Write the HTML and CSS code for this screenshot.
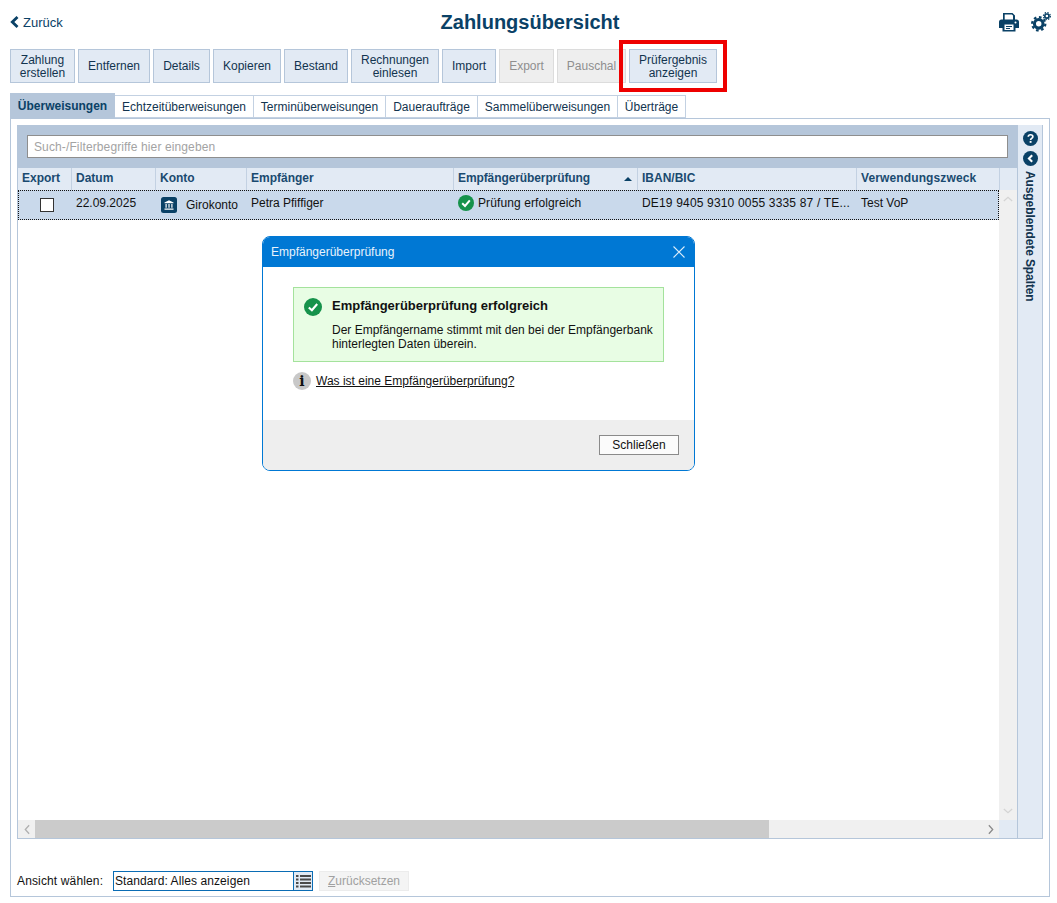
FILE: index.html
```html
<!DOCTYPE html>
<html lang="de">
<head>
    <meta charset="UTF-8">
    <title>Zahlungsübersicht</title>
    <link rel="stylesheet" href="styles.css">
</head>
<body>
    <div class="page">
        <header class="topbar">
            <a class="back"><svg class="back-icon" viewBox="0 0 9 12"><path d="M7.500 1 2.300 6l5.200 5" fill="none" stroke="#0a4166" stroke-width="2.800"/></svg>Zurück</a>
            <h1>Zahlungsübersicht</h1>
            <div class="top-icons">
                <svg class="print-icon" viewBox="0 0 20 20"><path fill="#0a4166" d="M4 1h9.500L16 3.500V8H14V3.500L12.800 2.600H5.700V8H4z"/><path fill="#0a4166" fill-rule="evenodd" d="M2.500 7.500h15A2.500 2.500 0 0 1 20 10v6h-3.500v3.500h-13V16H0v-6a2.500 2.500 0 0 1 2.500-2.500zM5.500 12.500v5.500h9v-5.500zm1.500 1.500h6v1H7zm0 2h4v1H7zM16.500 9.500a1 1 0 1 0 0 2 1 1 0 0 0 0-2z"/></svg>
                <svg class="cog-icon" viewBox="0 0 22 22"><g fill="none" stroke="#0a4166"><circle cx="8.500" cy="13" r="4.700" stroke-width="3.400"/><circle cx="8.500" cy="13" r="7.300" stroke-width="2.400" stroke-dasharray="2.900 2.830"/><circle cx="17.500" cy="4.500" r="2.300" stroke-width="1.800"/><circle cx="17.500" cy="4.500" r="3.800" stroke-width="1.400" stroke-dasharray="1.600 1.380"/></g></svg>
            </div>
        </header>

        <div class="toolbar">
            <button class="tool two w65">Zahlung<br>erstellen</button>
            <button class="tool w72">Entfernen</button>
            <button class="tool w57">Details</button>
            <button class="tool w68">Kopieren</button>
            <button class="tool w64">Bestand</button>
            <button class="tool two w88">Rechnungen<br>einlesen</button>
            <button class="tool w54">Import</button>
            <button class="tool w55 off">Export</button>
            <button class="tool w69 off">Pauschal</button>
            <button class="tool two w88 marked">Prüfergebnis<br>anzeigen</button>
        </div>

        <nav class="tabs">
            <a class="tab active t105">Überweisungen</a>
            <a class="tab t139">Echtzeitüberweisungen</a>
            <a class="tab t132">Terminüberweisungen</a>
            <a class="tab t92">Daueraufträge</a>
            <a class="tab t140">Sammelüberweisungen</a>
            <a class="tab t68">Überträge</a>
        </nav>

        <main class="panel">
            <div class="workspace">
                <section class="table-area">
                    <div class="filter-band">
                        <input class="filter" type="text" placeholder="Such-/Filterbegriffe hier eingeben">
                    </div>
                    <div class="head-row">
                        <div class="th c-export">Export</div>
                        <div class="th c-datum">Datum</div>
                        <div class="th c-konto">Konto</div>
                        <div class="th c-name">Empfänger</div>
                        <div class="th c-check">Empfängerüberprüfung<span class="sort"></span></div>
                        <div class="th c-iban">IBAN/BIC</div>
                        <div class="th c-zweck">Verwendungszweck</div>
                        <div class="th c-rest"></div>
                    </div>
                    <div class="table-body">
                        <div class="rows">
                            <div class="row">
                                <div class="td c-export"><span class="checkbox"></span></div>
                                <div class="td c-datum">22.09.2025</div>
                                <div class="td c-konto konto-cell">
                                    <svg class="bank-icon" viewBox="0 0 16 16"><rect width="16" height="16" rx="2.500" fill="#0a4166"/><path fill="#fff" d="M8 3.300 12.500 5.600V6.300H3.500V5.600zM4.500 7h1.200v3.800H4.500zM7.400 7h1.200v3.800H7.400zM10.300 7h1.200v3.800h-1.200zM3.500 11.500h9v1.200h-9z"/></svg>
                                    <span class="konto-name">Girokonto</span>
                                </div>
                                <div class="td c-name">Petra Pfiffiger</div>
                                <div class="td c-check check-cell">
                                    <svg class="ok-icon" viewBox="0 0 16 16"><circle cx="8" cy="8" r="8" fill="#16924b"/><path d="M4.200 8.300 7 11l4.800-5.600" fill="none" stroke="#fff" stroke-width="2"/></svg>
                                    Prüfung erfolgreich
                                </div>
                                <div class="td c-iban">DE19 9405 9310 0055 3335 87 / TE...</div>
                                <div class="td c-zweck">Test VoP</div>
                            </div>
                        </div>
                        <div class="vscroll">
                            <svg viewBox="0 0 12 7"><path d="M1 6 6 1.500 11 6" fill="none" stroke="#d4d4d4" stroke-width="1.500"/></svg>
                            <svg viewBox="0 0 12 7"><path d="M1 1 6 5.500 11 1" fill="none" stroke="#d4d4d4" stroke-width="1.500"/></svg>
                        </div>
                    </div>
                    <div class="hscroll-row">
                        <div class="hscroll">
                            <svg class="arrow" viewBox="0 0 7 12"><path d="M6 1 1.500 6 6 11" fill="none" stroke="#b0b0b0" stroke-width="1.500"/></svg>
                            <div class="thumb"></div>
                            <svg class="arrow" viewBox="0 0 7 12"><path d="M1 1 5.500 6 1 11" fill="none" stroke="#8a8a8a" stroke-width="1.500"/></svg>
                        </div>
                        <div class="corner"></div>
                    </div>
                </section>
                <aside class="side">
                    <svg class="side-icon" viewBox="0 0 16 16"><circle cx="8" cy="8" r="8" fill="#0a4166"/><path d="M5.600 6.200C5.700 4.800 6.700 4 8 4c1.400 0 2.500.8 2.500 2.100 0 1.800-2.400 1.800-2.400 3.400" fill="none" stroke="#fff" stroke-width="1.800"/><rect x="7.100" y="10.600" width="2" height="2" fill="#fff"/></svg>
                    <svg class="side-icon" viewBox="0 0 16 16"><circle cx="8" cy="8" r="8" fill="#0a4166"/><path d="M9.800 4.500 6.300 8l3.500 3.500" fill="none" stroke="#fff" stroke-width="2.200"/></svg>
                    <div class="side-label">Ausgeblendete Spalten</div>
                </aside>
            </div>

            <footer class="view-bar">
                <label class="view-label">Ansicht wählen:</label>
                <div class="view-select">
                    <span class="view-value">Standard: Alles anzeigen</span>
                    <span class="view-btn"><svg viewBox="0 0 15 14"><path fill="#4a4a4a" d="M0 1h2.500v2H0zM4 1h11v2H4zM0 4.500h2.500v2H0zM4 4.500h11v2H4zM0 8h2.500v2H0zM4 8h11v2H4zM0 11.500h2.500v2H0zM4 11.500h11v2H4z"/></svg></span>
                </div>
                <button class="reset"><u>Z</u>urücksetzen</button>
            </footer>
        </main>
    </div>

    <!-- Dialog -->
    <div class="dialog">
        <div class="dialog-title">
            <span>Empfängerüberprüfung</span>
            <svg class="close-icon" viewBox="0 0 12 12"><path d="M.5.500l11 11M11.500.500l-11 11" stroke="#d9ecfa" stroke-width="1.100" fill="none"/></svg>
        </div>
        <div class="dialog-body">
            <div class="success">
                <svg class="success-icon" viewBox="0 0 18 18"><circle cx="9" cy="9" r="9" fill="#16924b"/><path d="M4.800 9.400 7.900 12.300 13.200 6" fill="none" stroke="#fff" stroke-width="2.100"/></svg>
                <div>
                    <h2>Empfängerüberprüfung erfolgreich</h2>
                    <p>Der Empfängername stimmt mit den bei der Empfängerbank hinterlegten Daten überein.</p>
                </div>
            </div>
            <div class="info-line">
                <span class="info-icon">i</span>
                <a class="info-link">Was ist eine Empfängerüberprüfung?</a>
            </div>
        </div>
        <div class="dialog-foot">
            <button class="close-btn">Schließen</button>
        </div>
    </div>
</body>
</html>
```

FILE: styles.css
```css
* {
    margin: 0;
    padding: 0;
    box-sizing: border-box;
}

html, body {
    height: 100%;
}

body {
    font-family: "Liberation Sans", Arial, sans-serif;
    font-size: 12px;
    color: #111;
    background-color: #fff;
    overflow: hidden;
}

.page {
    width: 1057px;
    height: 903px;
    padding: 0 7px 6px 10px;
    display: flex;
    flex-direction: column;
}

/* Top bar */
.topbar {
    height: 49px;
    padding-bottom: 5px;
    display: flex;
    align-items: center;
    justify-content: space-between;
    position: relative;
}

.back {
    display: flex;
    align-items: center;
    gap: 4px;
    font-size: 13px;
    color: #0a4166;
}

.back-icon {
    width: 9px;
    height: 12px;
}

.topbar h1 {
    position: absolute;
    left: 0;
    right: 0;
    top: 11px;
    text-align: center;
    font-size: 20px;
    line-height: 23px;
    color: #0a4166;
}

.top-icons {
    display: flex;
    align-items: center;
    gap: 12px;
    margin-right: -1px;
}

.print-icon {
    width: 20px;
    height: 20px;
}

.cog-icon {
    width: 20px;
    height: 20px;
}

/* Toolbar */
.toolbar {
    display: flex;
    gap: 3px;
    height: 34px;
}

.tool {
    height: 34px;
    font-family: inherit;
    font-size: 12px;
    line-height: 13px;
    color: #12344f;
    background-color: #e2eaf4;
    border: 1px solid #b5c6da;
}

.tool.two {
    padding-top: 2px;
}

.tool.off {
    color: #8f8f8f;
    background-color: #eeeeee;
    border-color: #dcdcdc;
}

.tool.marked {
    position: relative;
}

.tool.marked::after {
    content: "";
    position: absolute;
    top: -10px;
    bottom: -10px;
    left: -11px;
    right: -11px;
    border: 4px solid #ee0000;
}

.w54 { width: 54px; }
.w55 { width: 55px; }
.w57 { width: 57px; }
.w64 { width: 64px; }
.w65 { width: 65px; }
.w68 { width: 68px; }
.w69 { width: 69px; }
.w72 { width: 72px; }
.w88 { width: 88px; }

/* Tabs */
.tabs {
    display: flex;
    align-items: flex-end;
    height: 25px;
    margin-top: 10px;
    margin-bottom: 0;
}

.tab {
    height: 23px;
    line-height: 22px;
    text-align: center;
    color: #12344f;
    background-color: #fff;
    border: 1px solid #c3d1e2;
    border-left: 0;
}

.tab.active {
    height: 25px;
    line-height: 26px;
    font-weight: bold;
    color: #0a4166;
    background-color: #b5c6da;
    border: 0;
}

.t68 { width: 68px; }
.t92 { width: 92px; }
.t105 { width: 105px; }
.t132 { width: 132px; }
.t139 { width: 139px; }
.t140 { width: 140px; }

/* Main panel */
.panel {
    flex: 1;
    border: 1px solid #b5c6da;
    padding: 6px 6px 0 6px;
    display: flex;
    flex-direction: column;
}

.workspace {
    height: 714px;
    display: flex;
    border: 1px solid #b5c6da;
    border-top: 0;
}

.table-area {
    width: 999px;
    display: flex;
    flex-direction: column;
}

.filter-band {
    height: 43px;
    padding: 10px 9px;
    background-color: #b5c6da;
}

.filter {
    display: block;
    width: 981px;
    height: 23px;
    padding: 0 6px;
    font-family: inherit;
    font-size: 12px;
    letter-spacing: 0.12px;
    border: 1px solid #8e8e8e;
    background-color: #fff;
}

.filter::placeholder {
    color: #a3a3a3;
    opacity: 1;
}

.head-row {
    display: flex;
    height: 22px;
    background-color: #e2eaf4;
}

.th {
    line-height: 21px;
    padding-left: 4px;
    font-weight: bold;
    color: #1a4a70;
    border-right: 1px solid #c3d1e2;
    position: relative;
}

.th.c-check {
    letter-spacing: -0.1px;
}

.th.c-zweck {
    letter-spacing: 0.12px;
}

.sort {
    position: absolute;
    right: 5px;
    top: 9px;
    border-left: 4px solid transparent;
    border-right: 4px solid transparent;
    border-bottom: 4px solid #0a4166;
}

.c-export { width: 54px; }
.c-datum { width: 84px; }
.c-konto { width: 91px; }
.c-name { width: 207px; }
.c-check { width: 184px; }
.c-iban { width: 219px; }
.c-zweck { width: 143px; }
.c-rest { flex: 1; border-right: 0; }

.table-body {
    flex: 1;
    display: flex;
    min-height: 0;
}

.rows {
    flex: 1;
    min-width: 0;
}

.row {
    display: flex;
    height: 30px;
    background-color: #c9d9eb;
    border: 1px dotted #111;
}

.td {
    flex: none;
    padding: 5px 0 0 4px;
    line-height: 14px;
    white-space: nowrap;
    overflow: hidden;
}

.td.c-iban {
    letter-spacing: 0.17px;
}

.td.c-zweck {
    width: 141px;
}

.row .c-export {
    width: 53px;
    padding: 7px 0 0 21px;
}

.checkbox {
    display: block;
    width: 14px;
    height: 14px;
    background-color: #fff;
    border: 1px solid #333;
}

.konto-cell {
    display: flex;
    align-items: flex-start;
    gap: 9px;
    padding-left: 5px;
    padding-top: 6px;
}

.konto-name {
    padding-top: 1px;
}

.bank-icon {
    width: 16px;
    height: 16px;
    flex: none;
}

.check-cell {
    display: flex;
    align-items: flex-start;
    gap: 4px;
    letter-spacing: 0.1px;
}

.ok-icon {
    width: 16px;
    height: 16px;
    flex: none;
    margin-top: -1px;
}

.vscroll {
    flex: none;
    width: 18px;
    background-color: #f0f0f0;
    display: flex;
    flex-direction: column;
    justify-content: space-between;
    align-items: center;
    padding: 6px 0;
}

.vscroll svg {
    width: 10px;
    height: 6px;
}

.hscroll-row {
    display: flex;
    height: 18px;
}

.hscroll {
    flex: 1;
    display: flex;
    align-items: center;
    background-color: #f0f0f0;
}

.arrow {
    width: 6px;
    height: 11px;
    flex: none;
    margin: 0 5px 0 6px;
}

.hscroll .arrow:last-child {
    margin-left: auto;
    margin-right: 5px;
}

.thumb {
    width: 734px;
    height: 18px;
    background-color: #cbcbcb;
}

.corner {
    width: 18px;
    background-color: #e2eaf4;
}

.side {
    flex: 1;
    border-left: 1px solid #b5c6da;
    background-color: #e2eaf4;
    display: flex;
    flex-direction: column;
    align-items: center;
    padding-top: 6px;
    gap: 5px;
}

.side-icon {
    width: 15px;
    height: 15px;
    flex: none;
}

.side-label {
    writing-mode: vertical-rl;
    color: #12344f;
    font-weight: bold;
    font-size: 12px;
    line-height: 14px;
    letter-spacing: -0.1px;
}

/* Footer */
.view-bar {
    display: flex;
    align-items: center;
    height: 20px;
    margin-top: 32px;
}

.view-label {
    width: 96px;
    letter-spacing: 0.14px;
}

.view-select {
    width: 200px;
    height: 20px;
    display: flex;
    border: 1px solid #0a6cb4;
}

.view-value {
    flex: 1;
    line-height: 18px;
    padding-left: 1px;
    letter-spacing: 0.09px;
}

.view-btn {
    width: 19px;
    border-left: 1px solid #0a6cb4;
    background-color: #e2eaf4;
    display: flex;
    align-items: center;
    justify-content: center;
}

.view-btn svg {
    width: 15px;
    height: 14px;
}

.reset {
    width: 90px;
    height: 20px;
    margin-left: 6px;
    font-family: inherit;
    font-size: 12px;
    color: #a0a0a0;
    background-color: #f4f4f4;
    border: 1px solid #ececec;
}

/* Dialog */
.dialog {
    position: absolute;
    left: 262px;
    top: 236px;
    width: 433px;
    height: 235px;
    display: flex;
    flex-direction: column;
    background-color: #fff;
    border: 1px solid #0078d4;
    border-radius: 8px;
    overflow: hidden;
}

.dialog-title {
    height: 30px;
    padding: 0 9px 0 8px;
    display: flex;
    align-items: center;
    justify-content: space-between;
    color: #e8f3fc;
    background-color: #0078d4;
}

.close-icon {
    width: 12px;
    height: 12px;
}

.dialog-body {
    flex: 1;
    padding: 20px 30px 0 30px;
}

.success {
    height: 75px;
    padding: 10px 10px 0 10px;
    display: flex;
    gap: 10px;
    background-color: #e8fde4;
    border: 1px solid #a4e29c;
}

.success-icon {
    width: 18px;
    height: 18px;
    flex: none;
}

.success h2 {
    font-size: 13px;
    line-height: 16px;
    margin-bottom: 9px;
}

.success p {
    line-height: 14px;
}

.info-line {
    display: flex;
    align-items: center;
    gap: 5px;
    margin-top: 10px;
}

.info-icon {
    width: 18px;
    height: 18px;
    border-radius: 50%;
    background-color: #c8c8c8;
    font-family: "DejaVu Serif", serif;
    font-weight: bold;
    font-size: 14px;
    line-height: 18px;
    text-align: center;
}

.info-link {
    text-decoration: underline;
}

.dialog-foot {
    height: 50px;
    padding: 15px 15px 0 0;
    display: flex;
    justify-content: flex-end;
    background-color: #eeeeee;
}

.close-btn {
    width: 80px;
    height: 20px;
    font-family: inherit;
    font-size: 12px;
    color: #111;
    background-color: #fbfbfb;
    border: 1px solid #8a8a8a;
}
```
